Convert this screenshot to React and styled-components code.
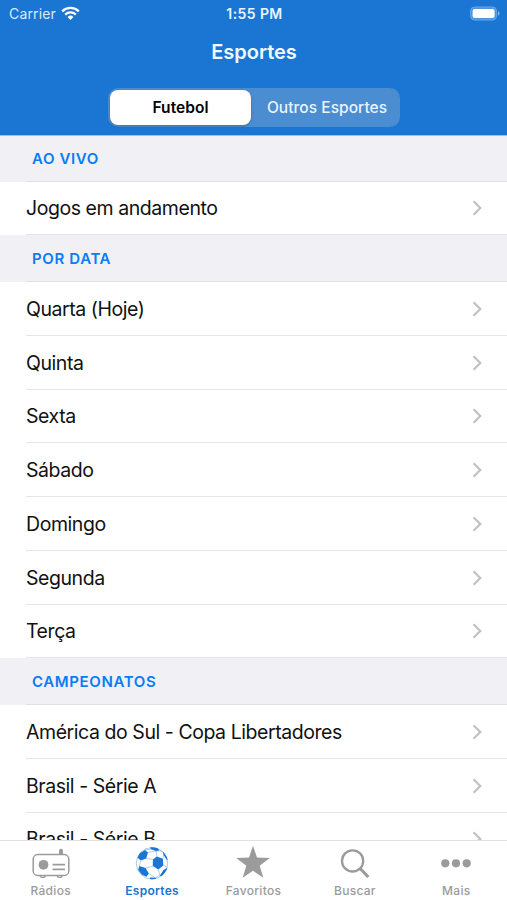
import React, { useState } from 'react';
import styled, { createGlobalStyle } from 'styled-components';

const GlobalStyle = createGlobalStyle`
  * {
    box-sizing: border-box;
  }

  body {
    margin: 0;
    overflow: hidden;
    font-family: Inter, "Liberation Sans", sans-serif;
  }
`;

const Screen = styled.div`
  display: flex;
  flex-direction: column;
  width: 507px;
  height: 900px;
  overflow: hidden;
  background: #fff;
`;

const Header = styled.header`
  flex: none;
  height: 136px;
  background: #1a76d2;
  border-bottom: 1px solid #8cc5f8;
  color: #fff;
`;

const StatusBar = styled.div`
  display: grid;
  grid-template-columns: 1fr auto 1fr;
  align-items: center;
  height: 27px;
  padding: 0 7px 0 9px;
`;

const Carrier = styled.div`
  display: flex;
  align-items: center;
  gap: 5px;
  font-size: 14px;
  letter-spacing: 0.15px;
  color: #d9eafc;
`;

const Clock = styled.div`
  font-size: 14px;
  font-weight: 600;
  letter-spacing: 0.4px;
  color: #e9f4ff;
`;

const Battery = styled.svg`
  justify-self: end;
`;

const Title = styled.h1`
  margin: 0;
  height: 50px;
  font-size: 20px;
  font-weight: 600;
  line-height: 50px;
  text-align: center;
  text-indent: 1px;
  color: #f2f9ff;
`;

const Segmented = styled.div`
  display: flex;
  width: 292px;
  height: 39px;
  margin: 11px auto 0 108px;
  padding: 2px;
  border-radius: 10px;
  background: #4a8dd0;
`;

const Segment = styled.button`
  flex: ${(props) => (props.$active ? '0 0 141px' : '1')};
  padding: ${(props) => (props.$active ? '0' : '0 0 0 5px')};
  border: none;
  border-radius: 8px;
  background: ${(props) => (props.$active ? '#fff' : 'transparent')};
  box-shadow: ${(props) => (props.$active ? '0 1px 3px rgba(0, 0, 0, 0.2)' : 'none')};
  color: ${(props) => (props.$active ? '#000' : '#eaf4ff')};
  font-family: inherit;
  font-size: 15.5px;
  font-weight: ${(props) => (props.$active ? 600 : 500)};
  letter-spacing: 0.05px;
  white-space: nowrap;
`;

const List = styled.main`
  flex: 1;
  min-height: 0;
  overflow: hidden;
`;

const SectionTitle = styled.h2`
  display: flex;
  align-items: center;
  height: ${(props) => (props.$first ? 45.5 : 46.75)}px;
  margin: 0;
  padding-left: 32px;
  background: linear-gradient(#e0e0e4, #e0e0e4) 26px 100% / 100% 1px no-repeat #f0f0f5;
  color: #0a7cf5;
  font-size: 15px;
  font-weight: 600;
  letter-spacing: 0.63px;
`;

const Row = styled.div`
  display: flex;
  align-items: center;
  justify-content: space-between;
  height: 53.75px;
  margin-left: 26px;
  padding: 1px 24px 0 0;
  border-bottom: 1px solid #e6e6e8;
  color: #111;
  font-size: 19.5px;
  letter-spacing: -0.44px;
  white-space: nowrap;
`;

const TabBar = styled.nav`
  display: grid;
  grid-template-columns: repeat(5, 1fr);
  flex: none;
  height: 60px;
  border-top: 1px solid #e2e2e2;
  background: #fff;
`;

const Tab = styled.div`
  display: flex;
  flex-direction: column;
  align-items: center;
  padding-top: 3px;
  color: ${(props) => (props.$active ? '#1a76d2' : '#9b9b9b')};
  font-size: 12px;
  font-weight: ${(props) => (props.$active ? 600 : 500)};
  letter-spacing: 0.3px;
  line-height: 14px;

  svg {
    display: block;
    margin-bottom: 4px;
  }
`;

const WifiIcon = () => (
  <svg width="19" height="15" viewBox="0 0 19 15" fill="none" stroke="#fff" strokeWidth="2.3">
    <path d="M1.2 5.3a12 12 0 0 1 16.6 0" />
    <path d="M4.2 8.6a7.6 7.6 0 0 1 10.6 0" />
    <path d="M9.5 13.9 6.6 11a4.1 4.1 0 0 1 5.8 0z" fill="#fff" stroke="none" />
  </svg>
);

const BatteryIcon = () => (
  <Battery width="30" height="15" viewBox="0 0 30 15">
    <rect x="0.6" y="1" width="26" height="13" rx="4" fill="#4f94dc" stroke="#6aa5e3" strokeWidth="1" />
    <rect x="2.6" y="3" width="22" height="9" rx="2" fill="#fff" />
    <path d="M28 5.3c2 .7 2 3.7 0 4.4z" fill="#86b7e9" />
  </Battery>
);

const Chevron = () => (
  <svg width="12" height="16" viewBox="0 0 12 16" fill="none" stroke="#c1c1c4" strokeWidth="2.2">
    <path d="M2.5 1.3 9.3 8l-6.8 6.7" />
  </svg>
);

const RadioIcon = () => (
  <svg width="40" height="36" viewBox="0 0 40 36" fill="none" stroke="currentColor">
    <rect x="2.2" y="10.6" width="35.6" height="20.8" rx="4.5" strokeWidth="1.5" />
    <path d="M9 31.6l1.2 1.8h3l1.2-1.8M26 31.6l1.2 1.8h3l1.2-1.8" strokeWidth="1.2" />
    <path d="M28 10V6.8a2 2 0 0 1 4 0V10z" fill="currentColor" stroke="none" />
    <circle cx="12.5" cy="20.8" r="4.9" fill="currentColor" stroke="none" />
    <path d="M21.5 20.6h12.5M21.5 25.3h12.5" strokeWidth="1.7" />
  </svg>
);

const BallIcon = () => (
  <svg width="40" height="36" viewBox="0 0 40 36">
    <defs>
      <clipPath id="ball">
        <circle cx="20" cy="19.3" r="16" />
      </clipPath>
    </defs>
    <g clipPath="url(#ball)" fill="currentColor">
      <path d="M24.8 12.4l6.1 2.4.4 6.6-5 4-5.5-3.3.1-6.7z" />
      <path d="M7.5 9.4l5.5-3.5 3 2.5-1.8 6-5.3 2.2-3.4-2.9z" />
      <path d="M7.3 21.9l6.3 2.2 3.2 5.5-2.3 3.2-4.8-2.3-3.5-4.6z" />
      <path d="M17.7 2l7.8 1.4 1.7 3.1-3.1.5-5.4-1.8z" />
      <path d="M30.7 7.6l4.5 3.4 2 5-2.6-.3-3-4.6z" />
      <path d="M31.5 25.9l4-2.5-1 6-4.7 3.9-1.9-1.9z" />
      <path d="M18.2 33.5l5 .3 1.5 2-7 .3z" />
      <path d="M13 5.9l5.7-.7M16 8.4l8.1-1.4.7 5.4M24.1 7l3.1-.5 3.5 1.1M31.6 11.1l-.7 3.7M14.2 14.4l6.7 1M8.9 16.6l-1.6 5.3M13.6 24.1l7.2-2M26.3 25.4l1.6 6M31.3 21.4l4.2 2M16.8 29.6l6.4 4.2 4.7-2.4" fill="none" stroke="currentColor" strokeWidth="0.55" opacity="0.65" />
    </g>
    <circle cx="20" cy="19.3" r="15.7" fill="none" stroke="currentColor" strokeWidth="0.6" opacity="0.65" />
  </svg>
);

const StarIcon = () => (
  <svg width="40" height="36" viewBox="0 0 40 36" fill="currentColor">
    <path d="M20 1.8l4 11.8 12.7.3-10 7.8 3.6 12.1L20 26.7 9.7 33.8l3.6-12.1-10-7.8 12.7-.3z" />
  </svg>
);

const SearchIcon = () => (
  <svg width="40" height="36" viewBox="0 0 40 36" fill="none" stroke="currentColor">
    <circle cx="17.6" cy="16.9" r="10.6" strokeWidth="2.3" />
    <path d="M25.2 24.6l8.2 8.4" strokeWidth="3" />
  </svg>
);

const MoreIcon = () => (
  <svg width="40" height="36" viewBox="0 0 40 36" fill="currentColor">
    <circle cx="9.3" cy="19.3" r="4.1" />
    <circle cx="20" cy="19.3" r="4.1" />
    <circle cx="30.7" cy="19.3" r="4.1" />
  </svg>
);

const sections = [
  { title: 'AO VIVO', items: ['Jogos em andamento'] },
  {
    title: 'POR DATA',
    items: ['Quarta (Hoje)', 'Quinta', 'Sexta', 'Sábado', 'Domingo', 'Segunda', 'Terça'],
  },
  {
    title: 'CAMPEONATOS',
    items: ['América do Sul - Copa Libertadores', 'Brasil - Série A', 'Brasil - Série B'],
  },
];

const tabs = [
  { label: 'Rádios', Icon: RadioIcon },
  { label: 'Esportes', Icon: BallIcon },
  { label: 'Favoritos', Icon: StarIcon },
  { label: 'Buscar', Icon: SearchIcon },
  { label: 'Mais', Icon: MoreIcon },
];

const App = () => {
  const [segment, setSegment] = useState('Futebol');

  return (
    <Screen>
      <GlobalStyle />
      <Header>
        <StatusBar>
          <Carrier>
            Carrier
            <WifiIcon />
          </Carrier>
          <Clock>1:55 PM</Clock>
          <BatteryIcon />
        </StatusBar>
        <Title>Esportes</Title>
        <Segmented>
          {['Futebol', 'Outros Esportes'].map((name) => (
            <Segment key={name} $active={segment === name} onClick={() => setSegment(name)}>
              {name}
            </Segment>
          ))}
        </Segmented>
      </Header>

      <List>
        {sections.map((section, index) => (
          <section key={section.title}>
            <SectionTitle $first={index === 0}>{section.title}</SectionTitle>
            {section.items.map((item) => (
              <Row key={item}>
                {item}
                <Chevron />
              </Row>
            ))}
          </section>
        ))}
      </List>

      <TabBar>
        {tabs.map(({ label, Icon }) => (
          <Tab key={label} $active={label === 'Esportes'}>
            <Icon />
            {label}
          </Tab>
        ))}
      </TabBar>
    </Screen>
  );
};

export default App;
